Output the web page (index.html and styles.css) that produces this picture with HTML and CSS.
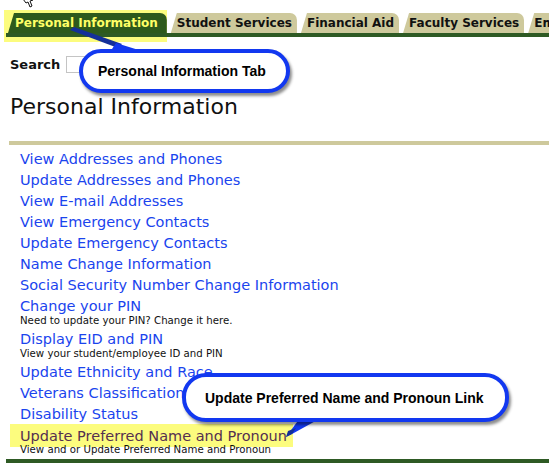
FILE: index.html
```html
<!DOCTYPE html>
<html lang="en">
<head>
    <meta charset="UTF-8">
    <title>Personal Information</title>
    <link rel="stylesheet" href="styles.css">
</head>
<body>
    <div class="page">
        <!-- mouse pointer left over from the screen capture -->
        <svg class="cursor" width="12" height="9" viewBox="0 0 12 9">
            <path d="M1 0 L4 4 L6 3 L8 8 L10 7 L8 2 L11 1 L9 0 Z" fill="#fff" stroke="#111" stroke-width="1"/>
        </svg>
        <div class="tab-highlight"></div>

        <nav class="tabs">
            <span class="tab active">Personal Information</span>
            <span class="tab">Student Services</span>
            <span class="tab">Financial Aid</span>
            <span class="tab">Faculty Services</span>
            <span class="tab">Employee Services</span>
        </nav>

        <form class="search">
            <label for="q">Search</label>
            <input type="text" id="q">
        </form>

        <h1>Personal Information</h1>
        <div class="rule"></div>

        <ul class="menu">
            <li><a href="#">View Addresses and Phones</a></li>
            <li><a href="#">Update Addresses and Phones</a></li>
            <li><a href="#">View E-mail Addresses</a></li>
            <li><a href="#">View Emergency Contacts</a></li>
            <li><a href="#">Update Emergency Contacts</a></li>
            <li><a href="#">Name Change Information</a></li>
            <li><a href="#">Social Security Number Change Information</a></li>
            <li><a href="#">Change your PIN</a><span class="desc">Need to update your PIN? Change it here.</span></li>
            <li><a href="#">Display EID and PIN</a><span class="desc">View your student/employee ID and PIN</span></li>
            <li><a href="#">Update Ethnicity and Race</a></li>
            <li><a href="#">Veterans Classification</a></li>
            <li><a href="#">Disability Status</a></li>
            <li><a href="#" class="marked">Update Preferred Name and Pronoun</a><span class="desc">View and or Update Preferred Name and Pronoun</span></li>
        </ul>

        <div class="footer-bar"></div>
        <div class="release">RELEASE: 8.7</div>

        <!-- annotation callouts -->
        <svg class="tails" width="549" height="466" viewBox="0 0 549 466">
            <polygon points="70,30 74,27 122,44 118,48" fill="#14309a"/>
            <polygon points="116,43 142,51 110,52" fill="#1238f0"/>
            <polygon points="300,418 321,418 292,434 286,437" fill="#1238f0"/>
            <polygon points="296,428 292,434 286,437 288,431" fill="#14309a"/>
        </svg>
        <div class="callout callout-tab">Personal Information Tab</div>
        <div class="callout callout-link">Update Preferred Name and Pronoun Link</div>
    </div>
</body>
</html>
```

FILE: styles.css
```css
body {
    margin: 0;
    font-family: "DejaVu Sans", Verdana, sans-serif;
    background: #ffffff;
}
.page {
    position: relative;
    width: 549px;
    height: 466px;
    overflow: hidden;
}
.cursor {
    position: absolute;
    left: 22px;
    top: -1px;
}
.tab-highlight {
    position: absolute;
    left: 4px;
    top: 10px;
    width: 163px;
    height: 32px;
    background: #fcfc7e;
}

/* tabs */
.tabs {
    position: relative;
    display: flex;
    gap: 4px;
    margin-left: 6px;
    padding: 13px 0 0 2px;
    border-bottom: 4px solid #2e5a24;
    white-space: nowrap;
    overflow: hidden;
}
.tab {
    flex: none;
    height: 20px;
    line-height: 21px;
    padding: 0 5px 0 6px;
    background: #cec99c;
    color: #111;
    font-size: 12px;
    font-weight: bold;
    border-radius: 6px 7px 0 0;
    clip-path: polygon(6px 0, 100% 0, 100% 100%, 0 100%);
}
.tab.active {
    padding: 0 9px 0 7px;
    background: #2e5a1c;
    color: #ffff66;
}

/* search */
.search {
    display: flex;
    align-items: center;
    gap: 6px;
    margin: 19px 0 0 10px;
}
.search label {
    font-size: 13px;
    font-weight: bold;
    color: #111;
}
.search input {
    width: 40px;
    height: 17px;
    margin: 0;
    padding: 0;
    box-sizing: border-box;
    border: 1px solid #c4c4c4;
}

h1 {
    margin: 21px 0 0 10px;
    font-size: 22px;
    font-weight: normal;
    line-height: 26px;
    color: #111;
}
.rule {
    height: 4px;
    margin: 21px 0 0 9px;
    background: #cec99c;
}

/* menu */
.menu {
    list-style: none;
    margin: 5px 0 0 0;
    padding: 0 0 0 20px;
}
.menu li {
    margin-bottom: 3px;
}
.menu a {
    display: block;
    font-size: 14.5px;
    line-height: 18px;
    color: #1a44ee;
    text-decoration: none;
}
.menu a.marked {
    width: max-content;
    margin: -2px 0 -3px -10px;
    padding: 3px 6px 2px 10px;
    background: #fcfc7e;
    color: #553050;
}
.desc {
    display: block;
    font-size: 10.2px;
    line-height: 12px;
    color: #111;
}

.footer-bar {
    height: 4px;
    margin: 1px 0 0 6px;
    background: #2e5a24;
}
.release {
    margin: 2px 0 0 10px;
    font-size: 12px;
    font-weight: bold;
    color: #666;
}

/* annotations */
.tails {
    position: absolute;
    left: 0;
    top: 0;
}
.callout {
    position: absolute;
    box-sizing: border-box;
    display: flex;
    align-items: center;
    border: 4px solid #1238f0;
    border-radius: 24px;
    background: #ffffff;
    box-shadow: 2px 3px 3px rgba(0, 0, 0, 0.45);
    font-family: "Liberation Sans", Arial, sans-serif;
    font-size: 14px;
    font-weight: bold;
    color: #000;
}
.callout-tab {
    left: 79px;
    top: 49px;
    width: 211px;
    height: 44px;
    padding-left: 15px;
}
.callout-link {
    left: 182px;
    top: 373px;
    width: 327px;
    height: 49px;
    padding-left: 19px;
}
```
